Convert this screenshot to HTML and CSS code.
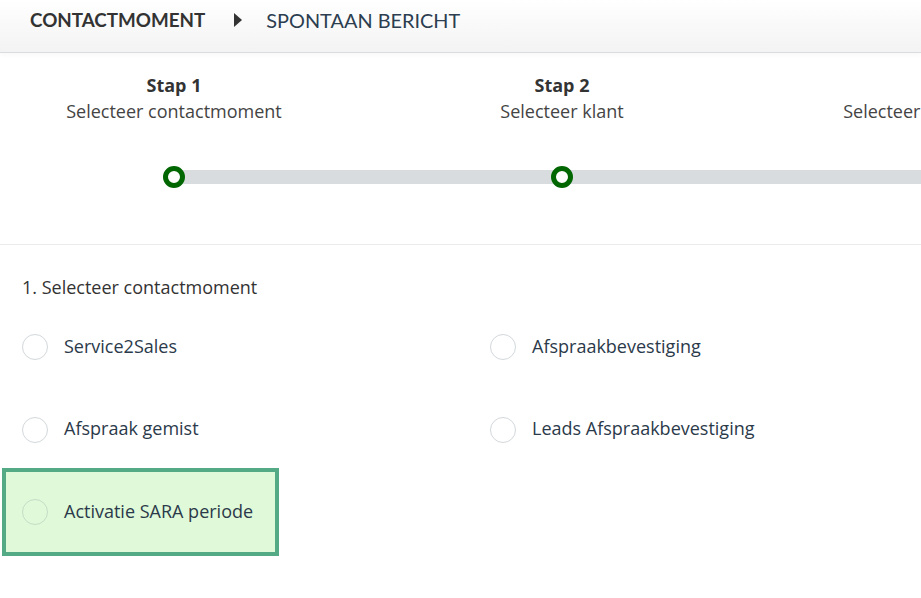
FILE: index.html
```html
<!DOCTYPE html>
<html lang="nl">
<head>
<meta charset="utf-8">
<title>Contactmoment</title>
<link rel="stylesheet" href="styles.css">
</head>
<body>
<header class="topbar">
  <span class="crumb crumb-main">CONTACTMOMENT</span>
  <span class="crumb-arrow"></span>
  <span class="crumb crumb-sub">SPONTAAN BERICHT</span>
</header>

<section class="stepper">
  <div class="step">
    <div class="step-title">Stap 1</div>
    <div class="step-label">Selecteer contactmoment</div>
    <div class="step-track"><span class="step-dot"></span></div>
  </div>
  <div class="step">
    <div class="step-title">Stap 2</div>
    <div class="step-label">Selecteer klant</div>
    <div class="step-track"><span class="step-dot"></span></div>
  </div>
  <div class="step">
    <div class="step-title">Stap 3</div>
    <div class="step-label">Selecteer contactpersoon</div>
    <div class="step-track"><span class="step-dot step-dot-todo"></span></div>
  </div>
</section>

<section class="choice">
  <div class="choice-title">1. Selecteer contactmoment</div>
  <div class="options">
    <label class="option"><span class="radio"></span><span class="option-text">Service2Sales</span></label>
    <label class="option"><span class="radio"></span><span class="option-text">Afspraakbevestiging</span></label>
    <label class="option"><span class="radio"></span><span class="option-text">Afspraak gemist</span></label>
    <label class="option"><span class="radio"></span><span class="option-text">Leads Afspraakbevestiging</span></label>
    <label class="option option-active"><span class="radio"></span><span class="option-text">Activatie SARA periode</span></label>
  </div>
</section>
</body>
</html>
```

FILE: styles.css
```css
* { box-sizing: border-box; }

html, body {
  margin: 0;
  padding: 0;
  background: #ffffff;
  overflow: hidden;
}

body {
  font-family: "Open Sans", "Liberation Sans", sans-serif;
  color: #333;
  width: 921px;
  height: 598px;
}

.topbar {
  height: 53px;
  padding: 6px 0 0 30px;
  display: flex;
  align-items: flex-start;
  background: linear-gradient(#ffffff, #f3f3f3);
  border-bottom: 1px solid #dadcde;
  box-shadow: 0 2px 5px rgba(0, 0, 0, 0.03);
}

.crumb {
  font-family: "Lato", "Liberation Sans", sans-serif;
  line-height: 28px;
}

.crumb-main {
  font-size: 18.8px;
  font-weight: 700;
  color: #333;
}

.crumb-sub {
  font-size: 19.9px;
  font-weight: 400;
  color: #2c3e50;
}

.crumb-arrow {
  width: 0;
  height: 0;
  margin: 7px 24px 0 29px;
  border-top: 7px solid transparent;
  border-bottom: 7px solid transparent;
  border-left: 8px solid #333;
}

.stepper {
  display: flex;
  gap: 40px;
  padding: 19px 0 56px 0;
  border-bottom: 1px solid #ebebeb;
}

.step {
  flex: 0 0 348px;
  text-align: center;
  font-size: 18px;
  line-height: 26px;
}

.step-title {
  font-weight: 700;
  color: #333;
}

.step-label {
  color: #444;
}

.step-track {
  position: relative;
  height: 22px;
  margin-top: 42px;
}

.step-track::before {
  content: "";
  position: absolute;
  left: 50%;
  top: 4px;
  width: 388px;
  height: 14px;
  background: #d8dcdf;
}

.step-dot {
  position: absolute;
  left: 163px;
  top: 0;
  width: 22px;
  height: 22px;
  border-radius: 50%;
  border: 5px solid #006600;
  background: #fff;
}

.step-dot-todo {
  border-color: #d8dcdf;
}

.choice {
  padding: 29px 0 0 0;
}

.choice-title {
  padding-left: 22px;
  font-size: 18px;
  line-height: 26px;
  color: #333;
}

.options {
  margin-top: 7px;
  padding-left: 6px;
  display: grid;
  grid-template-columns: 468px 1fr;
  grid-auto-rows: 80px;
  row-gap: 2.5px;
}

.option {
  justify-self: start;
  display: flex;
  align-items: center;
  gap: 16px;
  padding: 0 22px 0 16px;
  font-size: 18px;
  line-height: 24px;
  color: #2b3a4a;
  cursor: pointer;
}

.option-text {
  position: relative;
  top: -1.5px;
}

.option-active {
  background: #dff9d9;
  outline: 4px solid #55aa86;
}

.radio {
  width: 26px;
  height: 26px;
  border-radius: 50%;
  border: 1.5px solid #d3d8db;
  background: #fff;
  flex: 0 0 auto;
}

.option-active .radio {
  background: transparent;
  border-color: #c6dcc6;
}
```
